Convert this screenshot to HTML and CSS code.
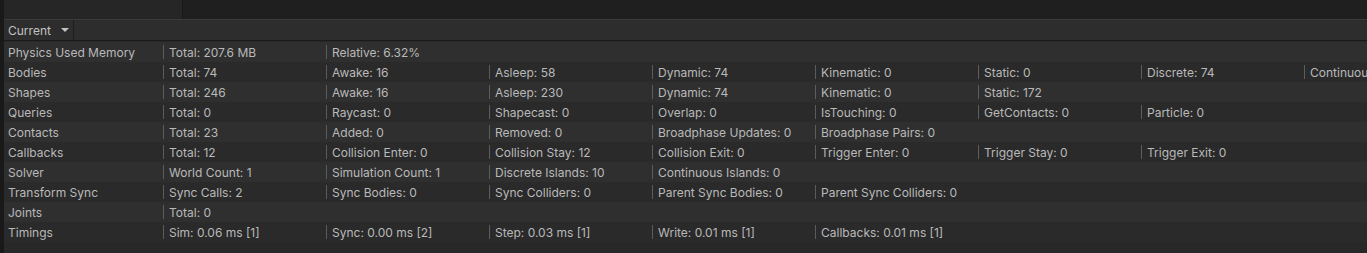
FILE: index.html
```html
<!DOCTYPE html>
<html>
<head>
<meta charset="utf-8">
<link rel="stylesheet" href="styles.css">
</head>
<body>
<div class="app">
  <div class="strip"></div>
  <div class="main">
    <div class="tabbar"><div class="tab"></div></div>
    <div class="toolbar">
      <div class="dropdown">Current <span class="arrow"></span></div>
    </div>
    <div class="table">
      <div class="row a"><div class="label">Physics Used Memory</div><div class="cell">Total: 207.6 MB</div><div class="cell">Relative: 6.32%</div></div>
      <div class="row b"><div class="label">Bodies</div><div class="cell">Total: 74</div><div class="cell">Awake: 16</div><div class="cell">Asleep: 58</div><div class="cell">Dynamic: 74</div><div class="cell">Kinematic: 0</div><div class="cell">Static: 0</div><div class="cell">Discrete: 74</div><div class="cell">Continuous: 0</div></div>
      <div class="row a"><div class="label">Shapes</div><div class="cell">Total: 246</div><div class="cell">Awake: 16</div><div class="cell">Asleep: 230</div><div class="cell">Dynamic: 74</div><div class="cell">Kinematic: 0</div><div class="cell">Static: 172</div></div>
      <div class="row b"><div class="label">Queries</div><div class="cell">Total: 0</div><div class="cell">Raycast: 0</div><div class="cell">Shapecast: 0</div><div class="cell">Overlap: 0</div><div class="cell">IsTouching: 0</div><div class="cell">GetContacts: 0</div><div class="cell">Particle: 0</div></div>
      <div class="row a"><div class="label">Contacts</div><div class="cell">Total: 23</div><div class="cell">Added: 0</div><div class="cell">Removed: 0</div><div class="cell">Broadphase Updates: 0</div><div class="cell">Broadphase Pairs: 0</div></div>
      <div class="row b"><div class="label">Callbacks</div><div class="cell">Total: 12</div><div class="cell">Collision Enter: 0</div><div class="cell">Collision Stay: 12</div><div class="cell">Collision Exit: 0</div><div class="cell">Trigger Enter: 0</div><div class="cell">Trigger Stay: 0</div><div class="cell">Trigger Exit: 0</div></div>
      <div class="row a"><div class="label">Solver</div><div class="cell">World Count: 1</div><div class="cell">Simulation Count: 1</div><div class="cell">Discrete Islands: 10</div><div class="cell">Continuous Islands: 0</div></div>
      <div class="row b"><div class="label">Transform Sync</div><div class="cell">Sync Calls: 2</div><div class="cell">Sync Bodies: 0</div><div class="cell">Sync Colliders: 0</div><div class="cell">Parent Sync Bodies: 0</div><div class="cell">Parent Sync Colliders: 0</div></div>
      <div class="row a"><div class="label">Joints</div><div class="cell">Total: 0</div></div>
      <div class="row b"><div class="label">Timings</div><div class="cell">Sim: 0.06 ms [1]</div><div class="cell">Sync: 0.00 ms [2]</div><div class="cell">Step: 0.03 ms [1]</div><div class="cell">Write: 0.01 ms [1]</div><div class="cell">Callbacks: 0.01 ms [1]</div></div>
    </div>
  </div>
</div>
</body>
</html>
```
FILE: styles.css
```css
html, body {
  margin: 0;
  padding: 0;
  background: #282828;
  height: 100%;
  overflow: hidden;
}
.app {
  display: flex;
  height: 253px;
  font-family: Inter, "Liberation Sans", sans-serif;
  font-size: 12px;
  color: #b9b9b9;
}
.strip {
  width: 4px;
  flex: none;
  background: #191919;
}
.main {
  flex: 1;
  display: flex;
  flex-direction: column;
  min-width: 0;
}
.tabbar {
  height: 19px;
  background: #1f1f1f;
  display: flex;
  border-bottom: 1px solid #3a3a3a;
}
.tab {
  width: 178px;
  background: #262626;
  border-right: 1px solid #191919;
}
.toolbar {
  height: 20px;
  background: #2d2d2d;
  border-bottom: 1px solid #1a1a1a;
  display: flex;
}
.dropdown {
  width: 70px;
  box-sizing: border-box;
  padding-left: 4px;
  display: flex;
  align-items: center;
  border-right: 1px solid #1d1d1d;
  color: #c2c2c2;
}
.arrow {
  margin-left: 10px;
  width: 0;
  height: 0;
  border-left: 4px solid transparent;
  border-right: 4px solid transparent;
  border-top: 4px solid #c2c2c2;
}
.table {
  margin-top: 1px;
  display: flex;
  flex-direction: column;
  overflow: hidden;
}
.row {
  height: 20px;
  display: flex;
  align-items: center;
  white-space: nowrap;
}
.row.a { background: #2f2f2f; }
.row.b { background: #2a2a2a; }
.label {
  width: 159px;
  flex: none;
  box-sizing: border-box;
  padding-left: 4px;
}
.cell {
  width: 163px;
  flex: none;
  box-sizing: border-box;
  padding-left: 6px;
  position: relative;
  display: flex;
  align-items: center;
  height: 20px;
}
.cell::before {
  content: "";
  position: absolute;
  left: 0;
  top: 3px;
  width: 1px;
  height: 14px;
  background: #5c5c5c;
}
```
